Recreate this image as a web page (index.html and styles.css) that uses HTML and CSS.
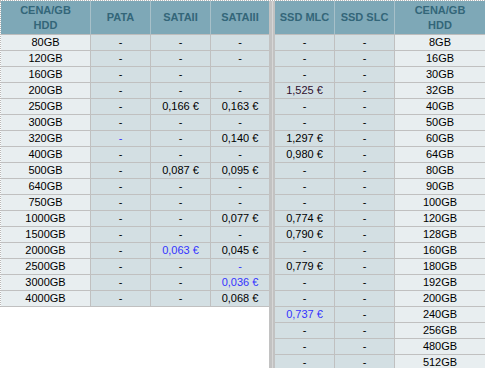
FILE: index.html
```html
<!DOCTYPE html>
<html>
<head>
<meta charset="utf-8">
<link rel="stylesheet" href="styles.css">
</head>
<body>
<div class="wrap">
  <table class="tbl left">
    <colgroup><col class="c-size"><col class="c-val"><col class="c-val"><col class="c-last"></colgroup>
    <thead>
      <tr><th>CENA/GB<br>HDD</th><th>PATA</th><th>SATAII</th><th class="nr">SATAIII</th></tr>
    </thead>
    <tbody>
      <tr><td class="sz">80GB</td><td>-</td><td>-</td><td class="nr">-</td></tr>
      <tr><td class="sz">120GB</td><td>-</td><td>-</td><td class="nr">-</td></tr>
      <tr><td class="sz">160GB</td><td>-</td><td>-</td><td class="nr"></td></tr>
      <tr><td class="sz">200GB</td><td>-</td><td>-</td><td class="nr">-</td></tr>
      <tr><td class="sz">250GB</td><td>-</td><td>0,166 €</td><td class="nr">0,163 €</td></tr>
      <tr><td class="sz">300GB</td><td>-</td><td>-</td><td class="nr">-</td></tr>
      <tr><td class="sz">320GB</td><td class="blue">-</td><td>-</td><td class="nr">0,140 €</td></tr>
      <tr><td class="sz">400GB</td><td>-</td><td>-</td><td class="nr">-</td></tr>
      <tr><td class="sz">500GB</td><td>-</td><td>0,087 €</td><td class="nr">0,095 €</td></tr>
      <tr><td class="sz">640GB</td><td>-</td><td>-</td><td class="nr">-</td></tr>
      <tr><td class="sz">750GB</td><td>-</td><td>-</td><td class="nr">-</td></tr>
      <tr><td class="sz">1000GB</td><td>-</td><td>-</td><td class="nr">0,077 €</td></tr>
      <tr><td class="sz">1500GB</td><td>-</td><td>-</td><td class="nr">-</td></tr>
      <tr><td class="sz">2000GB</td><td>-</td><td class="blue">0,063 €</td><td class="nr">0,045 €</td></tr>
      <tr><td class="sz">2500GB</td><td>-</td><td>-</td><td class="nr blue">-</td></tr>
      <tr><td class="sz">3000GB</td><td>-</td><td>-</td><td class="nr blue">0,036 €</td></tr>
      <tr><td class="sz">4000GB</td><td>-</td><td>-</td><td class="nr">0,068 €</td></tr>
    </tbody>
  </table>
  <div class="divider"></div>
  <table class="tbl right">
    <colgroup><col class="c-val"><col class="c-val"><col class="c-size2"></colgroup>
    <thead>
      <tr><th>SSD MLC</th><th>SSD SLC</th><th class="nr">CENA/GB<br>HDD</th></tr>
    </thead>
    <tbody>
      <tr><td>-</td><td>-</td><td class="sz nr">8GB</td></tr>
      <tr><td>-</td><td>-</td><td class="sz nr">16GB</td></tr>
      <tr><td>-</td><td>-</td><td class="sz nr">30GB</td></tr>
      <tr><td class="purple">1,525 €</td><td>-</td><td class="sz nr">32GB</td></tr>
      <tr><td>-</td><td>-</td><td class="sz nr">40GB</td></tr>
      <tr><td>-</td><td>-</td><td class="sz nr">50GB</td></tr>
      <tr><td>1,297 €</td><td>-</td><td class="sz nr">60GB</td></tr>
      <tr><td>0,980 €</td><td>-</td><td class="sz nr">64GB</td></tr>
      <tr><td>-</td><td>-</td><td class="sz nr">80GB</td></tr>
      <tr><td>-</td><td>-</td><td class="sz nr">90GB</td></tr>
      <tr><td>-</td><td>-</td><td class="sz nr">100GB</td></tr>
      <tr><td>0,774 €</td><td>-</td><td class="sz nr">120GB</td></tr>
      <tr><td>0,790 €</td><td>-</td><td class="sz nr">128GB</td></tr>
      <tr><td>-</td><td>-</td><td class="sz nr">160GB</td></tr>
      <tr><td>0,779 €</td><td>-</td><td class="sz nr">180GB</td></tr>
      <tr><td>-</td><td>-</td><td class="sz nr">192GB</td></tr>
      <tr><td>-</td><td>-</td><td class="sz nr">200GB</td></tr>
      <tr><td class="blue">0,737 €</td><td>-</td><td class="sz nr">240GB</td></tr>
      <tr><td>-</td><td>-</td><td class="sz nr">256GB</td></tr>
      <tr><td>-</td><td>-</td><td class="sz nr">480GB</td></tr>
      <tr><td>-</td><td>-</td><td class="sz nr">512GB</td></tr>
    </tbody>
  </table>
</div>
</body>
</html>
```
FILE: styles.css
```css
html, body {
  margin: 0;
  padding: 0;
  background: #fff;
}
body {
  font-family: "Liberation Sans", Arial, sans-serif;
  font-size: 11px;
  color: #000;
  overflow: hidden;
}
.wrap {
  display: flex;
  align-items: flex-start;
  width: 485px;
  height: 368px;
  border-top: 1px dotted #b8b8b8;
  box-sizing: border-box;
}
.tbl {
  border-collapse: separate;
  border-spacing: 0;
  table-layout: fixed;
  flex: none;
}
.left {
  width: 269px;
  border-left: 1px dotted #b8b8b8;
}
.right {
  width: 210px;
}
.c-size { width: 90px; }
.c-val { width: 60px; }
.c-last { width: 58px; }
.c-size2 { width: 90px; }
.divider {
  flex: none;
  width: 6px;
  height: 368px;
  background: linear-gradient(to right, #c2c2c2 0, #c2c2c2 3px, #d6d6d6 3px, #d6d6d6 4px, #c2c2c2 4px, #c2c2c2 6px);
}
th {
  height: 33px;
  padding: 0;
  background: #7ea8b7;
  color: #336679;
  font-weight: bold;
  font-size: 11px;
  line-height: 15px;
  text-align: center;
  vertical-align: middle;
  border-right: 1px solid #a7c0c9;
  border-bottom: 1px solid #bdbdbd;
}
td {
  height: 15px;
  padding: 0;
  line-height: 15px;
  text-align: center;
  background: #d3dfe3;
  border-right: 1px solid #c0c0c0;
  border-bottom: 1px solid #c0c0c0;
  white-space: nowrap;
}
td.sz {
  background: #e8eef0;
}
.nr {
  border-right: none;
}
.blue {
  color: #3333ff;
}
.purple {
  color: #2e0f2e;
}
```
